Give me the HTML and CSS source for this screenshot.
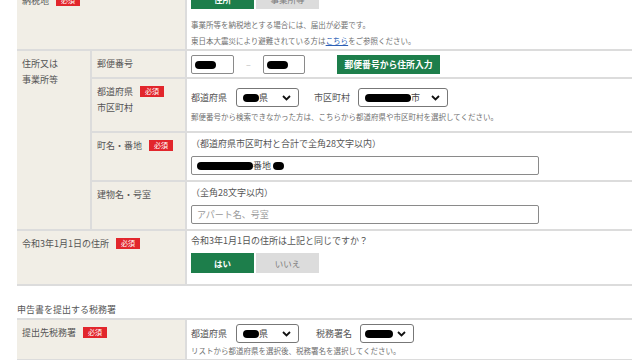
FILE: index.html
```html
<!DOCTYPE html>
<html lang="ja">
<head>
    <meta charset="UTF-8">
    <title>申告書作成 - 住所等入力</title>
    <link rel="stylesheet" href="styles.css">
</head>
<body>
<div class="page">
    <div class="form">
        <!-- 納税地 -->
        <div class="lbl span2 top0">納税地<span class="must">必須</span></div>
        <div class="val v0">
            <div class="toggle">
                <span class="tg on">住所</span><span class="tg">事業所等</span>
            </div>
            <p class="hint h0">事業所等を納税地とする場合には、届出が必要です。</p>
            <p class="hint">東日本大震災により避難されている方は<a href="#">こちら</a>をご参照ください。</p>
        </div>

        <!-- 住所又は事業所等 -->
        <div class="lbl group">住所又は<br>事業所等</div>

        <div class="sub">郵便番号</div>
        <div class="val v1">
            <span class="box zip1"><span class="mask m1"></span></span>
            <span class="dash">–</span>
            <span class="box zip2"><span class="mask m1"></span></span>
            <span class="btn-green">郵便番号から住所入力</span>
        </div>

        <div class="sub">都道府県<span class="must">必須</span><br>市区町村</div>
        <div class="val v2">
            <div class="line">
                <span class="cap">都道府県</span>
                <span class="sel pref"><span class="mask m2"></span>県<svg class="chev" width="9" height="6" viewBox="0 0 9 6"><polyline points="1,1 4.5,4.5 8,1" fill="none" stroke="#111" stroke-width="1.8"/></svg></span>
                <span class="cap cap2">市区町村</span>
                <span class="sel city"><span class="mask m3"></span>市<svg class="chev" width="9" height="6" viewBox="0 0 9 6"><polyline points="1,1 4.5,4.5 8,1" fill="none" stroke="#111" stroke-width="1.8"/></svg></span>
            </div>
            <p class="hint h2">郵便番号から検索できなかった方は、こちらから都道府県や市区町村を選択してください。</p>
        </div>

        <div class="sub">町名・番地<span class="must">必須</span></div>
        <div class="val v3">
            <p class="note">（都道府県市区町村と合計で全角28文字以内）</p>
            <span class="box wide"><span class="mask m4"></span>番地<span class="mask m5"></span></span>
        </div>

        <div class="sub">建物名・号室</div>
        <div class="val v3">
            <p class="note">（全角28文字以内）</p>
            <span class="box wide"><span class="ph">アパート名、号室</span></span>
        </div>

        <!-- 令和3年1月1日の住所 -->
        <div class="lbl span2">令和3年1月1日の住所<span class="must">必須</span></div>
        <div class="val v5">
            <p class="note">令和3年1月1日の住所は上記と同じですか？</p>
            <div class="toggle">
                <span class="tg on">はい</span><span class="tg">いいえ</span>
            </div>
        </div>
    </div>

    <h2 class="section">申告書を提出する税務署</h2>

    <div class="form top">
        <div class="lbl span2">提出先税務署<span class="must">必須</span></div>
        <div class="val v6">
            <div class="line">
                <span class="cap">都道府県</span>
                <span class="sel pref"><span class="mask m2"></span>県<svg class="chev" width="9" height="6" viewBox="0 0 9 6"><polyline points="1,1 4.5,4.5 8,1" fill="none" stroke="#111" stroke-width="1.8"/></svg></span>
                <span class="cap cap3">税務署名</span>
                <span class="sel office"><span class="mask m6"></span><svg class="chev" width="9" height="6" viewBox="0 0 9 6"><polyline points="1,1 4.5,4.5 8,1" fill="none" stroke="#111" stroke-width="1.8"/></svg></span>
            </div>
            <p class="hint">リストから都道府県を選択後、税務署名を選択してください。</p>
        </div>
    </div>
</div>
</body>
</html>
```
FILE: styles.css
```css
body {
    margin: 0;
    background: #fff;
    font-family: "Noto Sans CJK JP", "Liberation Sans", sans-serif;
    color: #555;
    font-size: 9px;
    overflow: hidden;
}
p {
    margin: 0;
}
.page {
    margin-top: -15px;
    margin-left: 17px;
    width: 615px;
}
.form {
    display: grid;
    grid-template-columns: 73px 95px 1fr;
}
.form.top {
    border-top: 2px solid #dcdcdc;
}
.lbl, .sub {
    background: #f1eee6;
    border-bottom: 2px solid #dcdcdc;
    padding: 5px 0 0 5px;
    line-height: 16px;
}
.sub {
    border-left: 2px solid #dcdcdc;
    padding-left: 5px;
}
.span2 {
    grid-column: 1 / 3;
}
.group {
    grid-row: span 4;
}
.top0 {
    padding-top: 8px;
}
.must {
    display: inline-block;
    vertical-align: 1px;
    margin-left: 7px;
    width: 24px;
    height: 11px;
    line-height: 11px;
    background: #e2262c;
    color: #fff;
    font-size: 7px;
    text-align: center;
}
.val {
    border-left: 2px solid #dcdcdc;
    border-bottom: 2px solid #dcdcdc;
    padding-left: 4px;
}
.v0 {
    padding-top: 4px;
}
.v1 {
    display: flex;
    align-items: center;
    padding: 4px 0 3px 4px;
}
.v2 {
    padding: 9px 0 6px 4px;
}
.v3 {
    padding: 4px 0 5px 4px;
}
.v5 {
    padding: 3px 0 11px 4px;
}
.v6 {
    padding: 4px 0 0 4px;
}
.hint {
    font-size: 7.5px;
    line-height: 16px;
    color: #707070;
}
.h0 {
    margin-top: 8px;
}
.h2 {
    margin-top: 2px;
}
.hint a {
    color: #2c5fb5;
    text-decoration: underline;
}
.note {
    line-height: 14px;
    margin-bottom: 5px;
}
.toggle {
    display: flex;
    gap: 2px;
}
.tg {
    width: 63px;
    height: 20px;
    line-height: 20px;
    text-align: center;
    background: #dcdcdc;
    color: #7a7a7a;
    font-size: 8.5px;
}
.tg.on {
    background: #1d7e4b;
    color: #fff;
    font-weight: bold;
}
.box {
    display: flex;
    align-items: center;
    box-sizing: border-box;
    height: 19px;
    border: 1px solid #8a8a8a;
    border-radius: 2px;
    background: #fff;
    padding-left: 3px;
    color: #444;
}
.zip1 {
    width: 43px;
}
.zip2 {
    width: 42px;
}
.dash {
    width: 29px;
    text-align: center;
    color: #bbb;
}
.btn-green {
    margin-left: 32px;
    width: 103px;
    height: 19px;
    line-height: 19px;
    text-align: center;
    background: #1d7e4b;
    color: #fff;
    font-weight: bold;
    font-size: 8.8px;
}
.wide {
    width: 348px;
    padding-left: 5px;
}
.ph {
    color: #999;
}
.line {
    display: flex;
    align-items: center;
}
.cap {
    width: 45px;
}
.cap2 {
    margin-left: 15px;
    width: 44px;
}
.cap3 {
    margin-left: 17px;
    width: 44px;
}
.sel {
    display: flex;
    align-items: center;
    box-sizing: border-box;
    height: 19px;
    border: 1px solid #777;
    border-radius: 3px;
    background: #fff;
    padding-left: 6px;
    color: #444;
    position: relative;
}
.pref {
    width: 63px;
}
.city {
    width: 90px;
}
.office {
    width: 54px;
    padding-left: 4px;
}
.chev {
    position: absolute;
    right: 7px;
    top: 6px;
}
.mask {
    display: inline-block;
    height: 8px;
    background: #000;
    border-radius: 5px;
}
.m1 {
    width: 21px;
}
.m2 {
    width: 16px;
}
.m3 {
    width: 46px;
}
.m4 {
    width: 56px;
}
.m5 {
    width: 11px;
    margin-left: 2px;
}
.m6 {
    width: 28px;
}
.section {
    margin: 16px 0 0;
    font-size: 9px;
    font-weight: normal;
    line-height: 16px;
    color: #555;
}
```
